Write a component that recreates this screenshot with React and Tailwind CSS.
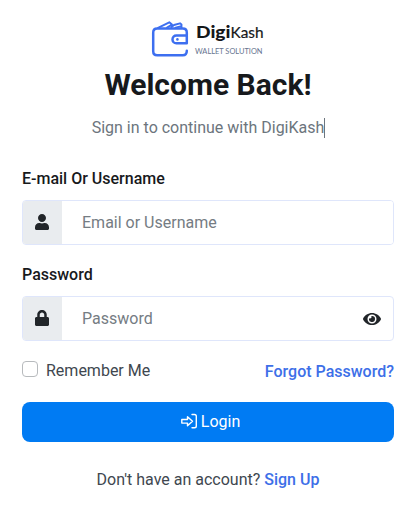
import React from "react";
import { FaUser, FaLock, FaEye } from "react-icons/fa";

function Logo() {
  return (
    <svg className="h-[44px] w-[124px] overflow-visible" viewBox="146 18 124 44" aria-label="DigiKash Wallet Solution">
      <g fill="none" stroke="#3d6ff0" strokeWidth="2.5" strokeLinecap="round" strokeLinejoin="round">
        <path d="M186.800 35V32.500Q186.800 28.500 182.800 28.500H157.200Q153.200 28.500 153.200 32.500V51.300Q153.200 55.300 157.200 55.300H182.800Q186.800 55.300 186.800 50.800" />
        <path d="M186.800 35.600H176.300A3.800 3.800 0 0 0 176.300 43.200H186.800Z" />
        <path strokeWidth="1.900" d="M158 27.800L169.300 22.300L172 24.500L167 27.600M171.300 27.200L174 25L180 23.300L181.500 24.500V27.800M175.500 27.600L180.500 26.300" />
      </g>
      <circle cx="177.400" cy="39.400" r="1.300" fill="#3d6ff0" />
      <text x="196" y="38" fontFamily="Lato, sans-serif" fontSize="17.500" fontWeight="900" fill="#151719" textLength="34.500" lengthAdjust="spacingAndGlyphs">Digi</text>
      <text x="230.500" y="38" fontFamily="Lato, sans-serif" fontSize="16" fill="#151719" stroke="#151719" strokeWidth="0.200" textLength="33" lengthAdjust="spacingAndGlyphs">Kash</text>
      <text x="195" y="53.800" fontFamily="Lato, sans-serif" fontSize="7.600" fill="#66748f" textLength="67.500" lengthAdjust="spacingAndGlyphs">WALLET SOLUTION</text>
    </svg>
  );
}

function Field({ label, icon, placeholder, type, trailing }) {
  return (
    <div>
      <label className="block text-[16px] leading-6 font-medium text-[#17191c]">{label}</label>
      <div className="mt-[9px] flex h-[45px] overflow-hidden rounded-[4px] border border-[#dfe6fb]">
        <span className="flex w-[39px] shrink-0 items-center justify-center bg-[#e9ecef] pr-px pb-px text-[#212529]">{icon}</span>
        <input
          type={type}
          placeholder={placeholder}
          className="min-w-0 flex-1 bg-white pl-[20px] text-[16px] text-[#212529] outline-none placeholder:text-[#757c83]"
        />
        {trailing}
      </div>
    </div>
  );
}

export default function App() {
  return (
    <main className="h-[514px] w-[416px] overflow-hidden bg-white px-[22px] pt-[18px] font-[Roboto,sans-serif] text-[16px]">
      <header className="flex flex-col items-center">
        <Logo />
        <h1 className="mt-[5px] text-[30px] leading-[36px] font-bold text-[#17191c]">Welcome Back!</h1>
        <p className="mt-[15px] ml-px flex h-[20px] items-center border-r border-[#6c757d] leading-5 text-[#6c757d]">
          Sign in to continue with DigiKash
        </p>
      </header>
      <form className="mt-[29px]">
        <Field label="E-mail Or Username" type="text" placeholder="Email or Username" icon={<FaUser size={16} />} />
        <div className="mt-[18px]">
          <Field
            label="Password"
            type="password"
            placeholder="Password"
            icon={<FaLock size={16} />}
            trailing={
              <button type="button" aria-label="Show password" className="flex w-[42px] items-center justify-center text-[#212529]">
                <FaEye size={18} />
              </button>
            }
          />
        </div>
        <div className="mt-[17px] flex items-center justify-between leading-6">
          <label className="flex items-center text-[#40474f]">
            <input type="checkbox" className="mr-[8px] mb-[4px] size-4 appearance-none rounded-[4px] border border-[#b7babd] bg-white" />
            Remember Me
          </label>
          <a className="mt-[2px] font-medium text-[#3d6fe8]">Forgot Password?</a>
        </div>
        <button type="button" className="mt-[18px] flex h-[40px] w-full items-center justify-center rounded-[8px] bg-[#007bf3] pl-[5px] text-white">
          <svg className="mr-[4px] mb-[2px] size-4" viewBox="0 0 16 16" fill="none" stroke="currentColor" strokeWidth="1.400" strokeLinejoin="round" strokeLinecap="round">
            <path d="M0.800 6.500H6.500V3.800L11.500 8.300L6.500 12.800V10.100H0.800Z" />
            <path d="M11 1.500H13.500Q15.300 1.500 15.300 3.300V13Q15.300 14.800 13.500 14.800H11" />
          </svg>
          Login
        </button>
      </form>
      <p className="mt-[26px] text-center leading-6 text-[#40474f]">
        Don't have an account? <a className="font-medium text-[#3d6fe8]">Sign Up</a>
      </p>
    </main>
  );
}
